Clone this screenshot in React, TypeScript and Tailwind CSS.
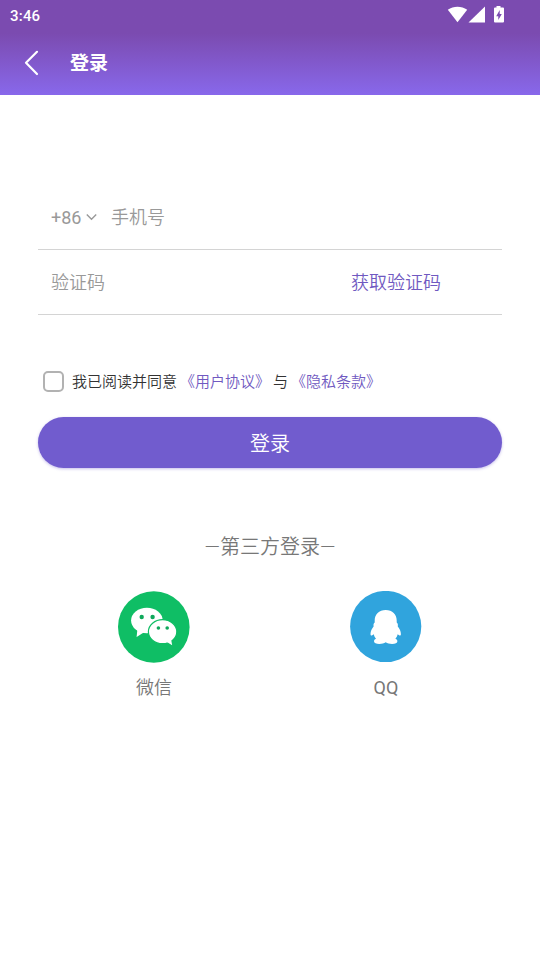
import React from "react";

const StatusBar: React.FC = () => {
  return (
    <div className="flex h-8 items-center justify-between pl-2.5 pr-[35px]">
      <span className="text-[15px] font-medium leading-4 tracking-[0.2px]">3:46</span>
      <svg className="h-5 w-[58px]" viewBox="0 0 58 20" fill="#fff">
        {/* wifi */}
        <path d="M.8 3.7C6.5-.4 14.5-.4 20.200 3.700L10.500 16.200Z" />
        {/* signal */}
        <path d="M38 .4V16.500H21.500Z" />
        {/* battery */}
        <path d="M49.500 0h4v1.600h2.500a1 1 0 0 1 1 1V15.500a1 1 0 0 1-1 1h-8a1 1 0 0 1-1-1V2.600a1 1 0 0 1 1-1h1.500z" />
        <path d="M52.700 4 49.200 10.200H51.300V14L54.800 8H52.700Z" fill="#7b4cb2" />
      </svg>
    </div>
  );
};

const Header: React.FC = () => {
  return (
    <header className="h-[95px] bg-linear-to-b from-[#7b4bb0] from-35% to-[#8868eb] text-white">
      <StatusBar />
      <div className="flex h-[62px] items-center pl-6">
        <svg className="h-[26px] w-4" viewBox="0 0 16 26" fill="none" stroke="#fff" strokeWidth="2.2" strokeLinecap="round" strokeLinejoin="round">
          <path d="M13 1.800 2 12.800 13 24" />
        </svg>
        <h1 className="ml-[30px] pt-0.5 text-[19px] font-bold leading-6">登录</h1>
      </div>
    </header>
  );
};

const WechatIcon: React.FC = () => {
  return (
    <svg className="size-[72px]" viewBox="0 0 72 72">
      <circle cx="35.800" cy="36" r="35.800" fill="#0fbe65" />
      <g fill="#fff">
        <ellipse cx="28.900" cy="29.500" rx="15.800" ry="12.800" />
        <path d="M19.500 37.500 18.600 46 26.500 41Z" />
      </g>
      <g fill="#fff" stroke="#0fbe65" strokeWidth="1.200">
        <ellipse cx="44.600" cy="40.700" rx="14.200" ry="12" />
      </g>
      <path d="M48 50.500 54.200 54.200 53 48Z" fill="#fff" />
      <g fill="#0fa85b">
        <circle cx="23.700" cy="26" r="2.200" />
        <circle cx="34.600" cy="26" r="2.200" />
        <circle cx="40.400" cy="37" r="1.800" />
        <circle cx="49.200" cy="37" r="1.800" />
      </g>
    </svg>
  );
};

const QQIcon: React.FC = () => {
  return (
    <svg className="size-[72px]" viewBox="0 0 72 72">
      <circle cx="35.700" cy="35.500" r="35.600" fill="#30a4dd" />
      <path
        fill="#fff"
        d="M35.700 19C29 19 24.700 23.500 24.700 29.500V31.500C23.500 32.500 23.200 34 23.700 35.300C21.800 37.800 20.500 40.500 20.500 43C20.500 44.500 21.300 45 22.300 44.300L23.700 43.300C24.100 45 24.900 46.500 26 47.700C24.600 48.300 24 49 24 50.200C24 52 26.200 53 29.300 53C32 53 34 52.300 35.700 51.300C37.400 52.300 39.400 53 42.100 53C45.200 53 47.400 52 47.400 50.200C47.400 49 46.800 48.300 45.400 47.700C46.500 46.500 47.300 45 47.700 43.300L49.100 44.300C50.100 45 50.900 44.500 50.900 43C50.900 40.500 49.600 37.800 47.700 35.300C48.200 34 47.900 32.500 46.700 31.500V29.500C46.700 23.500 42.400 19 35.700 19Z"
      />
    </svg>
  );
};

const App: React.FC = () => {
  return (
    <div className="min-h-[960px] w-[540px] bg-white font-['Roboto','Noto_Sans_CJK_SC',sans-serif]">
      <Header />

      <main className="px-[38px] pt-[90px]">
        {/* Phone number */}
        <div className="flex h-[65px] items-center border-b border-[#d4d4d4] pl-[13px] text-lg leading-6 text-[#999]">
          <span className="pt-0.5">+86</span>
          <svg className="ml-[5px] h-[7px] w-[11px]" viewBox="0 0 11 7" fill="none" stroke="#999" strokeWidth="1.400">
            <path d="M.8 .500 5.500 5.200 10.200 .500" />
          </svg>
          <span className="ml-[13.5px] pt-0.5 font-[350]">手机号</span>
        </div>

        {/* Verification code */}
        <div className="flex h-[65px] items-center justify-between border-b border-[#d4d4d4] pl-[13px] pr-[61px] pt-0.5 text-lg leading-6">
          <span className="font-[350] text-[#999]">验证码</span>
          <button className="font-[350] text-[#7059c1]">获取验证码</button>
        </div>

        <div className="mt-[55px] flex h-[22px] items-center pl-[5px] text-[15px] font-[350] leading-[22px] text-[#333]">
          <span className="size-[21px] rounded-[5px] border-2 border-[#b2b2b2]" />
          <span className="ml-2 pt-0.5">我已阅读并同意</span>
          <span className="ml-[3px] pt-0.5 text-[#7059c1]">《用户协议》</span>
          <span className="ml-[3px] pt-0.5">与</span>
          <span className="ml-[3px] pt-0.5 text-[#7059c1]">《隐私条款》</span>
        </div>

        <button className="mt-[25px] flex h-[51px] w-full items-center justify-center rounded-full bg-[#715cce] pt-0.5 text-xl font-[350] text-white shadow-[0_1px_3px_#715cce66]">
          登录
        </button>

        {/* Third party login */}
        <p className="mt-[65px] text-center text-xl font-[350] leading-7 text-[#777]">—第三方登录—</p>
        <div className="mt-[30px] flex text-lg leading-6 text-[#777]">
          <div className="flex flex-1 flex-col items-center">
            <WechatIcon />
            <span className="mt-[13px] font-[350]">微信</span>
          </div>
          <div className="flex flex-1 flex-col items-center">
            <QQIcon />
            <span className="mt-[13px]">QQ</span>
          </div>
        </div>
      </main>
    </div>
  );
};

export default App;
